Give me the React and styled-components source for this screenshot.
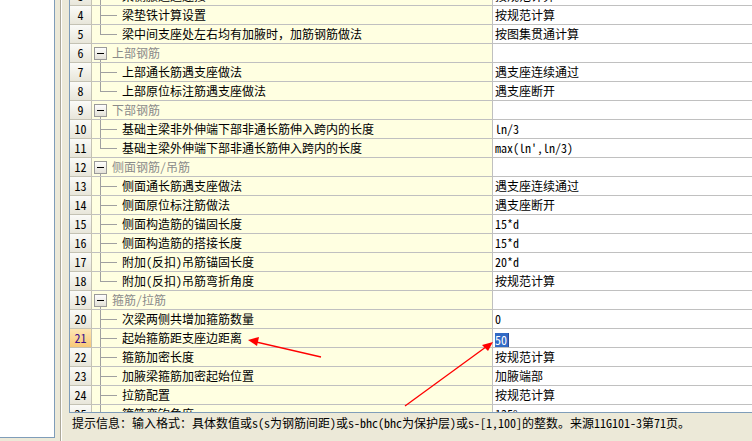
import React from "react";
import styled, { createGlobalStyle } from "styled-components";

const GlobalStyle = createGlobalStyle`
  html, body { margin: 0; padding: 0; }
  body {
    background: #ece9d8;
    font-family: "Noto Sans Mono CJK SC", "Noto Sans CJK SC", "DejaVu Sans", sans-serif;
    font-size: 12px;
    color: #000;
    overflow: hidden;
  }
`;

const rows = [
  { n: 3, kind: "child", label: "梁侧腋通过连接", value: "按规范计算" },
  { n: 4, kind: "child", label: "梁垫铁计算设置", value: "按规范计算" },
  { n: 5, kind: "last", label: "梁中间支座处左右均有加腋时，加筋钢筋做法", value: "按图集贯通计算" },
  { n: 6, kind: "group", label: "上部钢筋" },
  { n: 7, kind: "child", label: "上部通长筋遇支座做法", value: "遇支座连续通过" },
  { n: 8, kind: "last", label: "上部原位标注筋遇支座做法", value: "遇支座断开" },
  { n: 9, kind: "group", label: "下部钢筋" },
  { n: 10, kind: "child", label: "基础主梁非外伸端下部非通长筋伸入跨内的长度", value: "ln/3" },
  { n: 11, kind: "last", label: "基础主梁外伸端下部非通长筋伸入跨内的长度", value: "max(ln',ln/3)" },
  { n: 12, kind: "group", label: "侧面钢筋/吊筋" },
  { n: 13, kind: "child", label: "侧面通长筋遇支座做法", value: "遇支座连续通过" },
  { n: 14, kind: "child", label: "侧面原位标注筋做法", value: "遇支座断开" },
  { n: 15, kind: "child", label: "侧面构造筋的锚固长度", value: "15*d" },
  { n: 16, kind: "child", label: "侧面构造筋的搭接长度", value: "15*d" },
  { n: 17, kind: "child", label: "附加(反扣)吊筋锚固长度", value: "20*d" },
  { n: 18, kind: "last", label: "附加(反扣)吊筋弯折角度", value: "按规范计算" },
  { n: 19, kind: "group", label: "箍筋/拉筋" },
  { n: 20, kind: "child", label: "次梁两侧共增加箍筋数量", value: "0" },
  { n: 21, kind: "child", label: "起始箍筋距支座边距离", value: "50", active: true },
  { n: 22, kind: "child", label: "箍筋加密长度", value: "按规范计算" },
  { n: 23, kind: "child", label: "加腋梁箍筋加密起始位置", value: "加腋端部" },
  { n: 24, kind: "child", label: "拉筋配置", value: "按规范计算" },
  { n: 25, kind: "child", label: "箍筋弯钩角度", value: "135°" },
];

const Window = styled.div`
  position: relative;
  display: flex;
  width: 752px;
  height: 441px;
  overflow: hidden;
  background: #ece9d8;
`;

const SidePanel = styled.div`
  flex: none;
  width: 54px;
  height: 437px;
  background: #fff;
  border-right: 1px solid #7f9db9;
  border-bottom: 1px solid #7f9db9;
`;

const MainPanel = styled.div`
  flex: 1;
  min-width: 0;
  margin-left: 5px;
  padding-left: 8px;
  display: flex;
  flex-direction: column;
  border-left: 1px solid #aca899;
  box-shadow: inset 1px 0 0 #fff;
`;

const Grid = styled.div`
  flex: none;
  height: 412px;
  overflow: hidden;
  border-left: 1px solid #7f9db9;
  border-bottom: 1px solid #7f9db9;
`;

const Scroller = styled.div`
  margin-top: -13px;
`;

const Row = styled.div`
  display: grid;
  grid-template-columns: 22px 401px 1fr;
  height: 19px;
`;

const NumCell = styled.div`
  box-sizing: border-box;
  border-right: 1px solid #c4c2b4;
  border-bottom: 1px solid #c4c2b4;
  background: ${(p) =>
    p.$active
      ? "linear-gradient(#fde6b4, #f8c878)"
      : "linear-gradient(#fbfbf8, #e8e6da)"};
  color: ${(p) => (p.$active ? "#3a0c8a" : "#000")};
  text-align: center;
  line-height: 18px;
`;

const LabelCell = styled.div`
  box-sizing: border-box;
  display: flex;
  align-items: center;
  overflow: hidden;
  white-space: nowrap;
  background: #ffffe1;
  border-right: 1px solid #c0c0c0;
  border-bottom: 1px solid #c0c0c0;
  color: ${(p) => (p.$group ? "#8a8a8a" : "#000")};
  line-height: 18px;
`;

const ValueCell = styled.div`
  box-sizing: border-box;
  padding-left: 2px;
  background: #fff;
  border-bottom: 1px solid #c0c0c0;
  white-space: nowrap;
  overflow: hidden;
  line-height: 18px;
`;

const Selected = styled.span`
  display: inline-block;
  vertical-align: middle;
  line-height: 14px;
  padding: 0 1px 0 0;
  background: #316ac5;
  color: #fff;
`;

const Caret = styled.span`
  display: inline-block;
  vertical-align: middle;
  width: 1px;
  height: 14px;
  background: #2a4a9a;
`;

const Glyph = styled.svg`
  display: block;
  flex: none;
`;

const StatusBar = styled.div`
  padding: 1px 0 0 3px;
  white-space: nowrap;
  line-height: 18px;
`;

const Annotations = styled.svg`
  position: absolute;
  left: 0;
  top: 0;
  pointer-events: none;
`;

const line = "#a0a0a0";

const TreeLines = ({ kind }) => {
  if (kind === "group") {
    return (
      <Glyph width="20" height="18" viewBox="0 0 20 18">
        <defs>
          <linearGradient id="bx" x1="0" y1="0" x2="0" y2="1">
            <stop offset="0" stopColor="#ffffff" />
            <stop offset="1" stopColor="#e2e0d6" />
          </linearGradient>
        </defs>
        <line x1="8.5" y1="15" x2="8.5" y2="18" stroke={line} />
        <rect x="2.5" y="3.5" width="12" height="12" fill="url(#bx)" stroke="#9a9a9a" />
        <line x1="5" y1="9.5" x2="12" y2="9.5" stroke="#000" />
      </Glyph>
    );
  }
  return (
    <Glyph width="30" height="18" viewBox="0 0 30 18">
      <line x1="8.5" y1="0" x2="8.5" y2={kind === "last" ? 10 : 18} stroke={line} />
      <line x1="8" y1="9.5" x2="25" y2="9.5" stroke={line} />
    </Glyph>
  );
};

const Arrow = ({ from, tip, head }) => (
  <g>
    <line x1={from[0]} y1={from[1]} x2={tip[0]} y2={tip[1]} stroke="#ff0000" strokeWidth="1.3" />
    <polygon points={head} fill="#ff0000" />
  </g>
);

export default function App() {
  return (
    <>
      <GlobalStyle />
      <Window>
        <SidePanel />
        <MainPanel>
          <Grid>
            <Scroller>
              {rows.map((r) => (
                <Row key={r.n}>
                  <NumCell $active={r.active}>{r.n}</NumCell>
                  <LabelCell $group={r.kind === "group"}>
                    <TreeLines kind={r.kind} />
                    {r.label}
                  </LabelCell>
                  <ValueCell>
                    {r.active ? (
                      <>
                        <Selected>{r.value}</Selected>
                        <Caret />
                      </>
                    ) : (
                      r.value
                    )}
                  </ValueCell>
                </Row>
              ))}
            </Scroller>
          </Grid>
          <StatusBar>
            提示信息：输入格式：具体数值或s(s为钢筋间距)或s-bhc(bhc为保护层)或s-[1,100]的整数。来源11G101-3第71页。
          </StatusBar>
        </MainPanel>
        <Annotations width="752" height="441" viewBox="0 0 752 441">
          <Arrow from={[321, 357]} tip={[252, 341]} head="248,340 259,337 257,346" />
          <Arrow from={[405, 406]} tip={[490, 344]} head="493,342 488,351 482,345" />
        </Annotations>
      </Window>
    </>
  );
}
